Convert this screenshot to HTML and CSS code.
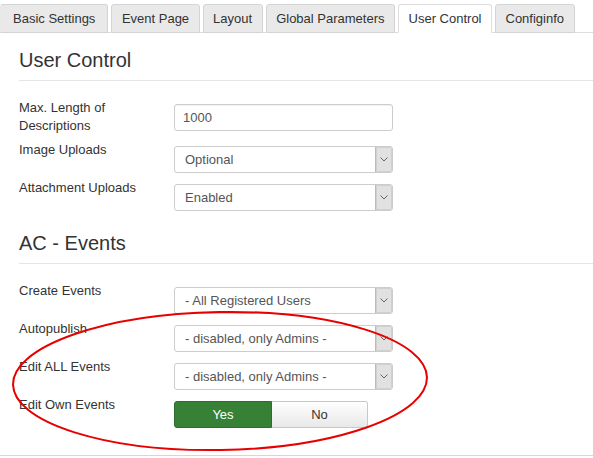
FILE: index.html
```html
<!DOCTYPE html>
<html lang="en">
<head>
    <meta charset="UTF-8">
    <title>User Control</title>
    <link rel="stylesheet" href="styles.css">
</head>
<body>
    <!-- Tabs -->
    <ul class="tabs">
        <li class="first"><a href="#">Basic Settings</a></li>
        <li><a href="#">Event Page</a></li>
        <li><a href="#">Layout</a></li>
        <li><a href="#">Global Parameters</a></li>
        <li class="active"><a href="#">User Control</a></li>
        <li><a href="#">Configinfo</a></li>
    </ul>

    <div class="tab-content">
        <h3>User Control</h3>

        <div class="control-group">
            <label>Max. Length of Descriptions</label>
            <input class="field" type="text" value="1000">
        </div>
        <div class="control-group">
            <label>Image Uploads</label>
            <div class="select"><span class="value">Optional</span><span class="arrow"><svg width="8" height="5" viewBox="0 0 8 5"><polyline points="0.5,0.5 4,4 7.5,0.5" fill="none" stroke="#666" stroke-width="1"/></svg></span></div>
        </div>
        <div class="control-group">
            <label>Attachment Uploads</label>
            <div class="select"><span class="value">Enabled</span><span class="arrow"><svg width="8" height="5" viewBox="0 0 8 5"><polyline points="0.5,0.5 4,4 7.5,0.5" fill="none" stroke="#666" stroke-width="1"/></svg></span></div>
        </div>

        <h3 class="second">AC - Events</h3>

        <div class="control-group">
            <label>Create Events</label>
            <div class="select"><span class="value">- All Registered Users</span><span class="arrow"><svg width="8" height="5" viewBox="0 0 8 5"><polyline points="0.5,0.5 4,4 7.5,0.5" fill="none" stroke="#666" stroke-width="1"/></svg></span></div>
        </div>
        <div class="control-group">
            <label>Autopublish</label>
            <div class="select"><span class="value">- disabled, only Admins -</span><span class="arrow"><svg width="8" height="5" viewBox="0 0 8 5"><polyline points="0.5,0.5 4,4 7.5,0.5" fill="none" stroke="#666" stroke-width="1"/></svg></span></div>
        </div>
        <div class="control-group">
            <label>Edit ALL Events</label>
            <div class="select"><span class="value">- disabled, only Admins -</span><span class="arrow"><svg width="8" height="5" viewBox="0 0 8 5"><polyline points="0.5,0.5 4,4 7.5,0.5" fill="none" stroke="#666" stroke-width="1"/></svg></span></div>
        </div>
        <div class="control-group">
            <label>Edit Own Events</label>
            <div class="btn-group">
                <span class="btn yes">Yes</span>
                <span class="btn no">No</span>
            </div>
        </div>
    </div>

    <!-- Marca vermelha por cima -->
    <svg class="mark" width="593" height="458" viewBox="0 0 593 458">
        <ellipse cx="220" cy="381" rx="207" ry="69" transform="rotate(-1 220 381)" fill="none" stroke="#e60000" stroke-width="2"/>
    </svg>
</body>
</html>
```

FILE: styles.css
```css
body {
    margin: 0;
    font-family: "Liberation Sans", Arial, sans-serif;
    font-size: 13px;
    color: #333;
    background: #fff;
    position: relative;
    width: 593px;
    height: 458px;
    overflow: hidden;
}

/* Tabs */
.tabs {
    list-style: none;
    margin: 0;
    padding: 4px 0 0;
    display: flex;
    border-bottom: 1px solid #ddd;
}
.tabs li {
    margin: 0 3px -1px 0;
}
.tabs li a {
    display: block;
    line-height: 27px;
    padding: 0 9.5px;
    color: #333;
    text-decoration: none;
    background: #e9e9e9;
    border: 1px solid #d4d4d4;
    border-radius: 3px 3px 0 0;
}
.tabs li.first a {
    padding: 0 12px;
    border-left-color: #e9e9e9;
}
.tabs li.active a {
    background: #fff;
    border-color: #ddd;
    border-bottom-color: #fff;
}

/* Conteúdo */
.tab-content {
    padding: 2px 0 21px 19px;
    border-bottom: 1px solid #d6d6d6;
}
h3 {
    font-size: 20px;
    font-weight: normal;
    line-height: 24px;
    margin: 13px 0 18px;
    padding-bottom: 8px;
    border-bottom: 1px solid #e5e5e5;
    color: #333;
}
h3.second {
    margin-top: 20px;
}
.control-group {
    display: flex;
    margin-bottom: 6px;
}
label {
    width: 155px;
    line-height: 18px;
    flex-shrink: 0;
}
.field {
    margin: 5px 0 0;
    width: 219px;
    height: 27px;
    box-sizing: border-box;
    border: 1px solid #ccc;
    border-radius: 3px;
    padding: 0 8px;
    font-family: inherit;
    font-size: 13px;
    color: #555;
    box-shadow: inset 0 1px 1px rgba(0, 0, 0, 0.06);
}
.select {
    margin-top: 5px;
    width: 219px;
    height: 27px;
    box-sizing: border-box;
    display: flex;
    border: 1px solid #ccc;
    border-radius: 3px;
    color: #555;
}
.select .value {
    flex: 1;
    line-height: 25px;
    padding-left: 10px;
}
.select .arrow {
    width: 16px;
    display: flex;
    align-items: center;
    justify-content: center;
    background: #e1e1e1;
    border-left: 1px solid #bbb;
    border-radius: 0 2px 2px 0;
    box-shadow: inset 0 0 0 1px #d0d0d0;
}

/* Sim / Não */
.btn-group {
    margin-top: 5px;
    display: flex;
}
.btn {
    display: block;
    box-sizing: border-box;
    height: 27px;
    line-height: 25px;
    text-align: center;
    font-size: 13px;
}
.btn.yes {
    width: 98px;
    background: #378137;
    border: 1px solid #2e6d2e;
    border-radius: 3px 0 0 3px;
    color: #fff;
}
.btn.no {
    width: 96px;
    background: linear-gradient(#fff, #e8e8e8);
    border: 1px solid #c8c8c8;
    border-left: none;
    border-radius: 0 3px 3px 0;
    color: #333;
}

.mark {
    position: absolute;
    top: 0;
    left: 0;
    pointer-events: none;
}
```
